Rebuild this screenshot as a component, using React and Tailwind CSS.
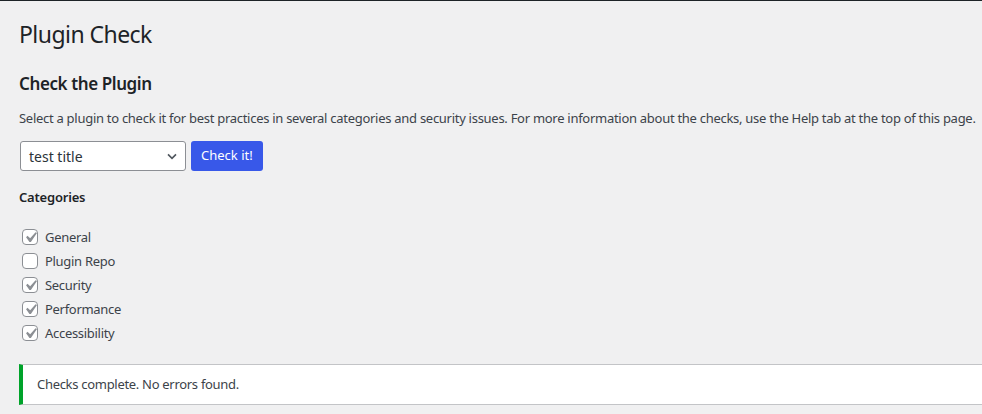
import { useState } from 'react';

const categories = [
  { id: 'general', label: 'General', checked: true },
  { id: 'plugin_repo', label: 'Plugin Repo', checked: false },
  { id: 'security', label: 'Security', checked: true },
  { id: 'performance', label: 'Performance', checked: true },
  { id: 'accessibility', label: 'Accessibility', checked: true },
];

const Checkbox = ({ checked, onChange }) => (
  <button
    type="button"
    onClick={onChange}
    className="w-4 h-4 shrink-0 rounded-[4px] border border-[#8c8f94] bg-white flex items-center justify-center overflow-visible"
  >
    {checked && (
      <svg viewBox="0 0 20 20" className="w-[21px] h-[21px] shrink-0 -m-[3px]" fill="#8c8f94">
        <path d="M14.83 4.89l1.34.94-5.81 8.38H9.02L5.78 9.67l1.34-1.25 2.57 2.4z" />
      </svg>
    )}
  </button>
);

export default function App() {
  const [checks, setChecks] = useState(categories);

  const toggle = (id) => {
    setChecks(prev => prev.map(c => (c.id === id ? { ...c, checked: !c.checked } : c)));
  };

  return (
    <div
      className="min-h-screen bg-[#f0f0f1] border-t border-[#1d2327] text-[#3c434a] text-[13px] overflow-hidden"
      style={{ fontFamily: '"Noto Sans", "Open Sans", sans-serif' }}
    >
      <div className="pl-[19px]">
        <h1 className="text-[23px] leading-[29px] font-normal text-[#1d2327] pt-[19px] tracking-[-0.55px]">Plugin Check</h1>

        <h2 className="text-[17px] leading-[22px] font-semibold text-[#1d2327] mt-[24px] tracking-[-0.4px]">Check the Plugin</h2>

        <p className="mt-[13px] leading-[20px] whitespace-nowrap tracking-[-0.28px]">
          Select a plugin to check it for best practices in several categories and security issues. For more information about the checks, use the Help tab at the top of this page.
        </p>

        <div className="flex gap-[5px] mt-[13px] ml-px">
          <div className="relative w-[166px] h-[30px] bg-white border border-[#8c8f94] rounded-[3px] flex items-center pl-[8px] text-[14px] text-[#2c3338]">
            test title
            <svg viewBox="0 0 20 20" className="absolute right-[5px] top-[6px] w-4 h-4" fill="none" stroke="#50575e" strokeWidth="2">
              <path d="M5 8l5 5 5-5" />
            </svg>
          </div>
          <button className="h-[30px] px-[10px] bg-[#3858e9] text-white rounded-[3px] text-[13px]">Check it!</button>
        </div>

        <h4 className="mt-[17px] font-semibold text-[13px] leading-[18px] text-[#1d2327] tracking-[-0.2px]">Categories</h4>

        <div className="mt-[19px] flex flex-col ml-[3px]">
          {checks.map(c => (
            <label key={c.id} className="flex items-center gap-[7px] h-[24px] leading-[24px]">
              <Checkbox checked={c.checked} onChange={() => toggle(c.id)} />
              <span className="text-[13px] tracking-[-0.3px]">{c.label}</span>
            </label>
          ))}
        </div>

        <div className="mt-[19px] bg-white border-y border-[#c3c4c7] border-l-4 border-l-[#00a32a] h-[41px] flex items-center pl-[14px] w-[calc(100%+20px)] tracking-[-0.3px]">
          Checks complete. No errors found.
        </div>
      </div>
    </div>
  );
}
